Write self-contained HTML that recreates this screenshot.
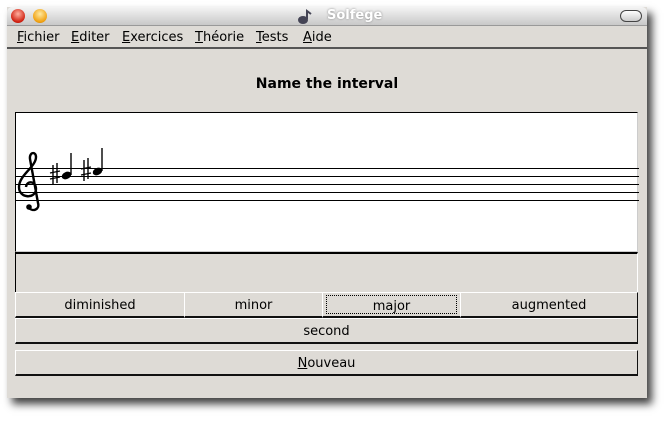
<!DOCTYPE html>
<html><head><meta charset="utf-8"><style>
*{margin:0;padding:0;box-sizing:border-box}
body{width:669px;height:422px;background:#fff;position:relative;font-family:"DejaVu Sans","Liberation Sans",sans-serif;font-size:13px;color:#000;overflow:hidden}
.win{position:absolute;left:7px;top:7px;width:640px;height:391px;background:#dedbd6;box-shadow:5px 6px 8px rgba(0,0,0,.75)}
.title{position:absolute;left:0;top:0;width:640px;height:19px;background:linear-gradient(#f4f4f4,#c8c8c8);border-radius:5px 5px 0 0;border-bottom:1px solid #999}
.title span{position:absolute;left:320px;top:1px;color:#fff;font-weight:bold;font-size:13px;text-shadow:0 0 2px #888}
.dot{position:absolute;top:2px;width:14px;height:14px;border-radius:50%}
.menu{position:absolute;left:0;top:20px;width:640px;height:22px;border-bottom:2px solid #555;}
.menu span{position:absolute;top:3px;font-size:13px}
.menu u{text-decoration:underline}
.h{position:absolute;left:0;width:640px;top:69px;text-align:center;font-weight:bold;font-size:14px}
.staff{position:absolute;left:8px;top:105px;width:623px;height:140px;background:#fff;border:1px solid #000;border-right-color:#ccc;border-bottom-color:#ccc}
.fb{position:absolute;left:8px;top:245px;width:623px;height:40px;border:1px solid #000;border-right-color:#fff;border-bottom:none;border-top-width:2px}
.b{position:absolute;height:26px;background:#dedbd6;border:1px solid #fff;border-right:1px solid #111;border-bottom:2px solid #111;text-align:center;line-height:25px;font-size:13px}
</style></head><body>
<div class="win">
<div class="title">
<div class="dot" style="left:4px;background:radial-gradient(circle at 50% 35%,#ffb0a0,#d02010 70%,#901000)"></div>
<div class="dot" style="left:26px;background:radial-gradient(circle at 50% 35%,#ffe9a0,#f0a010 70%,#b07000)"></div>
<svg style="position:absolute;left:290px;top:2px" width="16" height="16"><ellipse cx="6" cy="11" rx="5" ry="4" fill="#445"/><path d="M10 10V2l4 3" stroke="#445" stroke-width="2" fill="none"/></svg>
<span>Solfege</span>
<div style="position:absolute;left:613px;top:3px;width:22px;height:12px;border:1px solid #444;border-radius:6px;background:linear-gradient(#fff,#ccc)"></div>
</div>
<div class="menu">
<span style="left:10px"><u>F</u>ichier</span>
<span style="left:64px"><u>E</u>diter</span>
<span style="left:115px"><u>E</u>xercices</span>
<span style="left:188px"><u>T</u>héorie</span>
<span style="left:249px"><u>T</u>ests</span>
<span style="left:296px"><u>A</u>ide</span>
</div>
<div class="h">Name the interval</div>
<div class="staff">
<svg width="623" height="140" style="position:absolute;left:-8px;top:-106px;overflow:visible">
<g stroke="#000" stroke-width="1">
<line x1="8" y1="161.5" x2="631" y2="161.5"/><line x1="8" y1="169.5" x2="631" y2="169.5"/><line x1="8" y1="177.5" x2="631" y2="177.5"/><line x1="8" y1="185.5" x2="631" y2="185.5"/><line x1="8" y1="193.5" x2="631" y2="193.5"/>
</g>
<path d="M20 200 C25 206 32 202 30 196 L22 152 C21 145 28 144 28 150 C28 160 11 168 11 180 C11 192 28 192 28 182 C28 174 19 173 18 180" stroke="#000" stroke-width="2.4" fill="none"/>
<circle cx="21" cy="200" r="2.8"/>
<g stroke="#000" stroke-width="1.4">
<line x1="45" y1="158" x2="45" y2="178"/><line x1="49" y1="156" x2="49" y2="176"/><line x1="42" y1="166" x2="52" y2="164"/><line x1="42" y1="172" x2="52" y2="170"/>
<line x1="63" y1="146" x2="63" y2="168"/>
<line x1="76" y1="153" x2="76" y2="174"/><line x1="80" y1="151" x2="80" y2="172"/><line x1="73" y1="162" x2="83" y2="160"/><line x1="73" y1="168" x2="83" y2="166"/>
<line x1="94" y1="141" x2="94" y2="164"/>
</g>
<ellipse cx="58.5" cy="168.5" rx="5" ry="3.5" transform="rotate(-25 58.5 168.5)"/>
<ellipse cx="89.5" cy="164.5" rx="5" ry="3.5" transform="rotate(-25 89.5 164.5)"/>
</svg>
</div>
<div class="fb"></div>
<div class="b" style="left:8px;top:285px;width:170px">diminished</div>
<div class="b" style="left:177px;top:285px;width:139px">minor</div>
<div class="b" style="left:315px;top:285px;width:139px"><div style="position:absolute;left:3px;top:2px;right:3px;bottom:2px;border:1px dotted #000;line-height:21px">major</div></div>
<div class="b" style="left:453px;top:285px;width:178px">augmented</div>
<div class="b" style="left:8px;top:311px;width:623px">second</div>
<div class="b" style="left:8px;top:343px;width:623px"><u>N</u>ouveau</div>
</div>
</body></html>
